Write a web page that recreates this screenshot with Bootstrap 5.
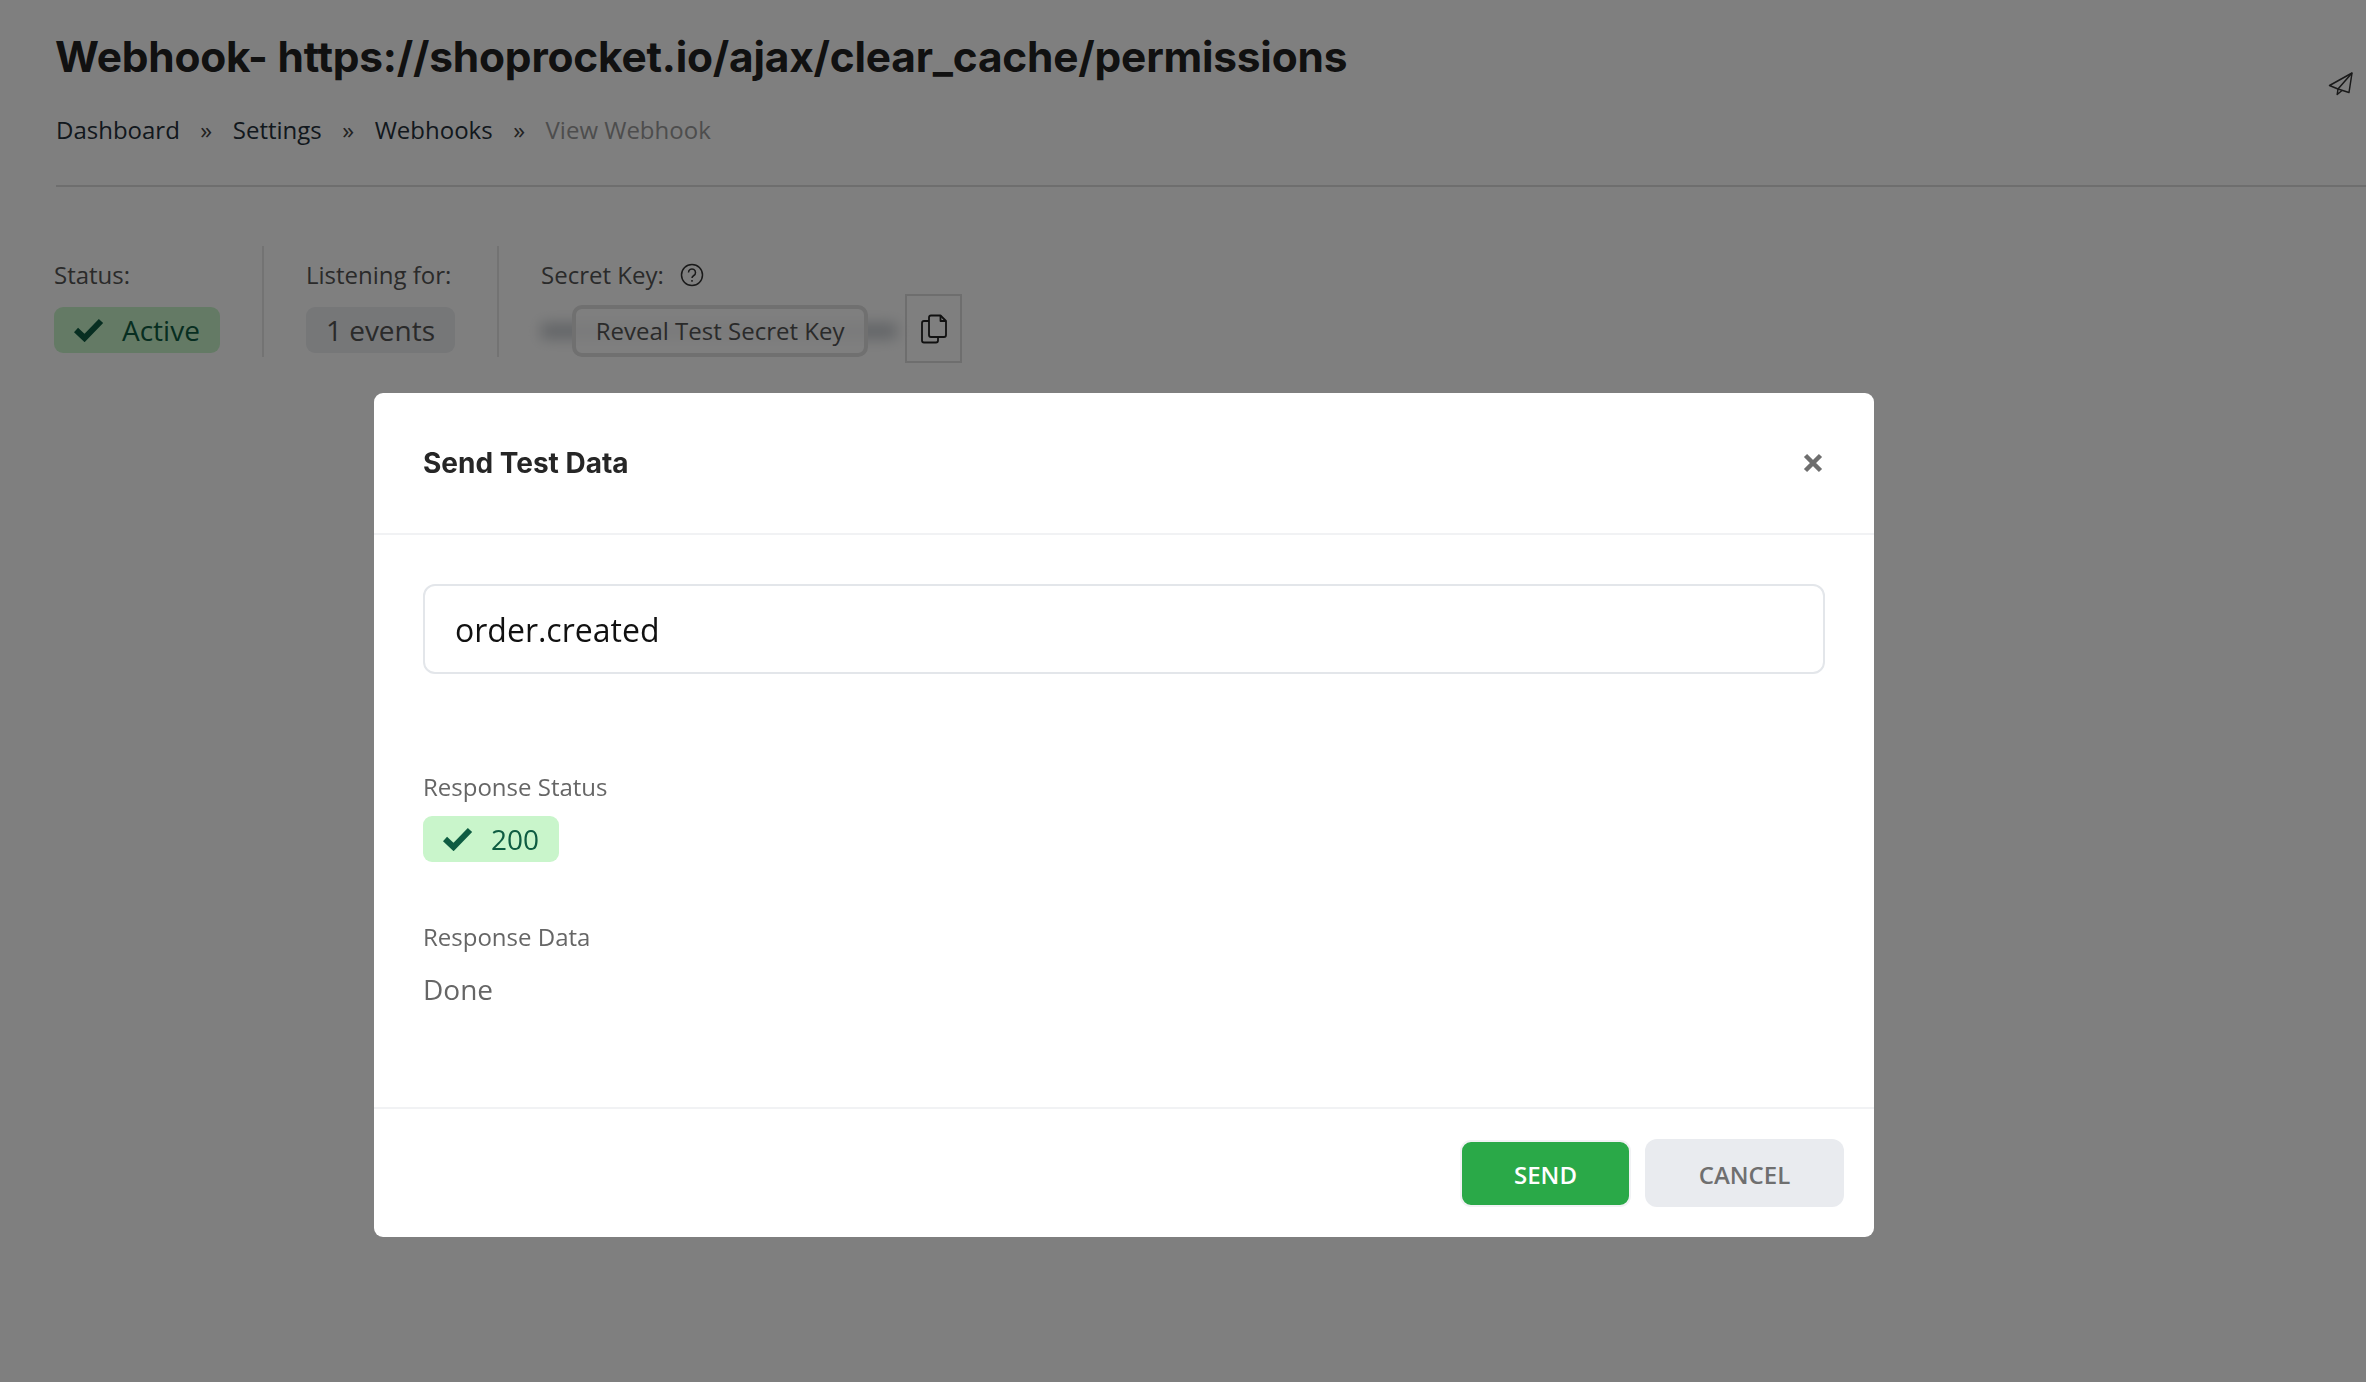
<!doctype html>
<html lang="en">
<head>
<meta charset="utf-8">
<title>View Webhook</title>
<link rel="stylesheet" href="https://cdn.jsdelivr.net/npm/bootstrap@5.3.0/dist/css/bootstrap.min.css">
<style>
html,body{height:100%;}
body{background:#fff;font-family:"Open Sans","Noto Sans",sans-serif;color:#212529;overflow:hidden;}
.page-wrap{padding:32px 0 0 54px;}
.page-title{font-family:Inter,sans-serif;font-weight:700;font-size:42.400px;line-height:50px;letter-spacing:-.2px;color:#222;margin:0 0 0 1px;}
.crumbs{margin:31px 0 0 2px;padding:0;font-size:24px;line-height:34px;}
.crumbs .breadcrumb-item+.breadcrumb-item{padding-left:20.500px;}
.crumbs .breadcrumb-item+.breadcrumb-item::before{content:"»";padding-right:20.500px;color:#444;}
.crumbs a{color:#25303b;text-decoration:none;}
.crumbs .active{color:#9a9a9a;}
.head-rule{margin:38px 0 0 2px;border:0;border-top:2px solid #ddd;opacity:1;}
.send-ico{position:absolute;left:2328px;top:71px;}
.meta-row{margin-top:59px;height:111px;}
.meta-col{border-right:2px solid #e6e6e6;padding-right:42px;margin-right:42px;}
.meta-col:last-child{border:0;padding:0;margin:0;}
.meta-label{font-size:24px;line-height:32px;color:#555;margin-top:13px;}
.pill{display:inline-flex;align-items:center;height:46px;padding:0 20px;border-radius:9px;font-size:28px;margin-top:16px;}
.pill-ok{background:#c9f5cb;color:#0e5c42;}
.pill-grey{background:#eceef1;color:#555;}
.pill svg{margin-right:18px;}
.secret-box{position:relative;width:356px;height:52px;margin-top:14px;}
.secret-blur{position:absolute;left:0;right:0;top:18px;height:16px;background:#c6cacf;filter:blur(7px);}
.reveal-btn{position:absolute;left:31px;top:0;width:296px;height:52px;background:rgba(255,255,255,.8);border:4px solid #e0e0e0;border-radius:10px;font-size:24px;color:#555;padding:0;}
.copy-box{width:57px;height:69px;border:2px solid #ddd;display:flex;align-items:center;justify-content:center;margin-left:8px;margin-top:3px;}
.modal.demo-modal{display:block;}
.demo-modal .modal-dialog{max-width:1500px;width:1500px;margin:393px 0 0 374px;}
.demo-modal .modal-content{border:0;border-radius:9px;height:844px;}
.demo-modal .modal-header{height:142px;padding:0 49px;border-bottom:2px solid #f1f2f4;}
.demo-modal .modal-title{font-family:Inter,sans-serif;font-weight:700;font-size:28px;color:#262626;}
.close-x{background:none;border:0;padding:0;margin-right:2px;display:flex;}
.demo-modal .modal-body{padding:49px 49px 0;}
.topic-input{height:90px;border:2px solid #e3e6ea;border-radius:12px;font-size:32px;padding:0 30px;color:#111;}
.resp-label{font-size:24px;line-height:32px;color:#666;}
.resp-value{font-size:28px;line-height:40px;color:#666;margin-top:16px;}
.demo-modal .modal-footer{height:130px;padding:0 30px 0 0;border-top:2px solid #f1f2f4;align-items:center;flex-wrap:nowrap;gap:14px;}
.demo-modal .modal-footer>*{margin:0;}
.btn-send{width:171px;height:67px;background:#2aa948;color:#fff;border:2px solid #f1f2f4;border-radius:11px;font-size:24px;font-weight:600;padding:3px 0 0;}
.btn-cancel{width:199px;height:68px;background:#e9ebef;color:#6f6f6f;border:0;border-radius:12px;font-size:24px;font-weight:600;padding:3px 0 0;}
.demo-backdrop{opacity:.5;}
.gap-resp-a{margin-top:97px;}
.gap-resp-b{margin-top:13px;}
.gap-resp-c{margin-top:59px;}
</style>
</head>
<body>
<main class="page-wrap">
  <h1 class="page-title">Webhook- https://shoprocket.io/ajax/clear_cache/permissions</h1>
  <ol class="breadcrumb crumbs">
    <li class="breadcrumb-item"><a href="#">Dashboard</a></li>
    <li class="breadcrumb-item"><a href="#">Settings</a></li>
    <li class="breadcrumb-item"><a href="#">Webhooks</a></li>
    <li class="breadcrumb-item active">View Webhook</li>
  </ol>
  <hr class="head-rule">
  <svg class="send-ico" width="26" height="26" viewBox="0 0 26 26" fill="none" stroke="#333" stroke-width="1.500" stroke-linejoin="round"><path d="M24 2 1.500 14.500l8.500 3.500 11 3.500z"/><path d="M24 2 10 18l-.8 5.500 4.800-4"/></svg>
  <div class="d-flex meta-row">
    <div class="meta-col">
      <div class="meta-label">Status:</div>
      <span class="pill pill-ok"><svg width="30" height="24" viewBox="0 0 30 24" fill="none" stroke="currentColor" stroke-width="6"><path d="M2 12l8.500 8L27 3"/></svg>Active</span>
    </div>
    <div class="meta-col">
      <div class="meta-label">Listening for:</div>
      <span class="pill pill-grey">1 events</span>
    </div>
    <div class="meta-col">
      <div class="meta-label d-flex align-items-center gap-3">Secret Key:
        <svg width="24" height="24" viewBox="0 0 24 24" fill="none" stroke="#333" stroke-width="1.500"><circle cx="12" cy="12" r="10.500"/><path d="M8.500 9.500a3.500 3.500 0 1 1 5.300 3c-1.300.8-1.800 1.400-1.800 2.600"/><path d="M12 17v1.800"/></svg>
      </div>
      <div class="d-flex align-items-start">
        <div class="secret-box">
          <div class="secret-blur"></div>
          <button class="reveal-btn" type="button">Reveal Test Secret Key</button>
        </div>
        <div class="copy-box">
          <svg width="26" height="30" viewBox="0 0 26 30" fill="none" stroke="#222" stroke-width="1.800" stroke-linejoin="round"><path d="M8 3.500q0-2 2-2h9.500L25 7v14q0 2-2 2H10q-2 0-2-2z"/><path d="M19.500 1.500V7H25"/><path d="M8 7H3Q1 7 1 9v17.500q0 2 2 2h12q2 0 2-2V23"/></svg>
        </div>
      </div>
    </div>
  </div>
</main>

<div class="modal-backdrop show demo-backdrop"></div>
<div class="modal demo-modal" tabindex="-1" role="dialog" aria-modal="true">
  <div class="modal-dialog">
    <div class="modal-content">
      <div class="modal-header">
        <h5 class="modal-title">Send Test Data</h5>
        <button class="close-x" type="button" aria-label="Close"><svg width="20" height="20" viewBox="0 0 20 20" stroke="#6e6e6e" stroke-width="4.500"><path d="M2.500 2.500l15 15M17.500 2.500l-15 15"/></svg></button>
      </div>
      <div class="modal-body">
        <input class="form-control topic-input" type="text" value="order.created">
        <div class="resp-label gap-resp-a">Response Status</div>
        <span class="pill pill-ok gap-resp-b"><svg width="30" height="24" viewBox="0 0 30 24" fill="none" stroke="currentColor" stroke-width="6"><path d="M2 12l8.500 8L27 3"/></svg>200</span>
        <div class="resp-label gap-resp-c">Response Data</div>
        <div class="resp-value">Done</div>
      </div>
      <div class="modal-footer">
        <button class="btn btn-send" type="button">SEND</button>
        <button class="btn btn-cancel" type="button">CANCEL</button>
      </div>
    </div>
  </div>
</div>
<script src="https://cdn.jsdelivr.net/npm/bootstrap@5.3.0/dist/js/bootstrap.bundle.min.js"></script>
</body>
</html>
